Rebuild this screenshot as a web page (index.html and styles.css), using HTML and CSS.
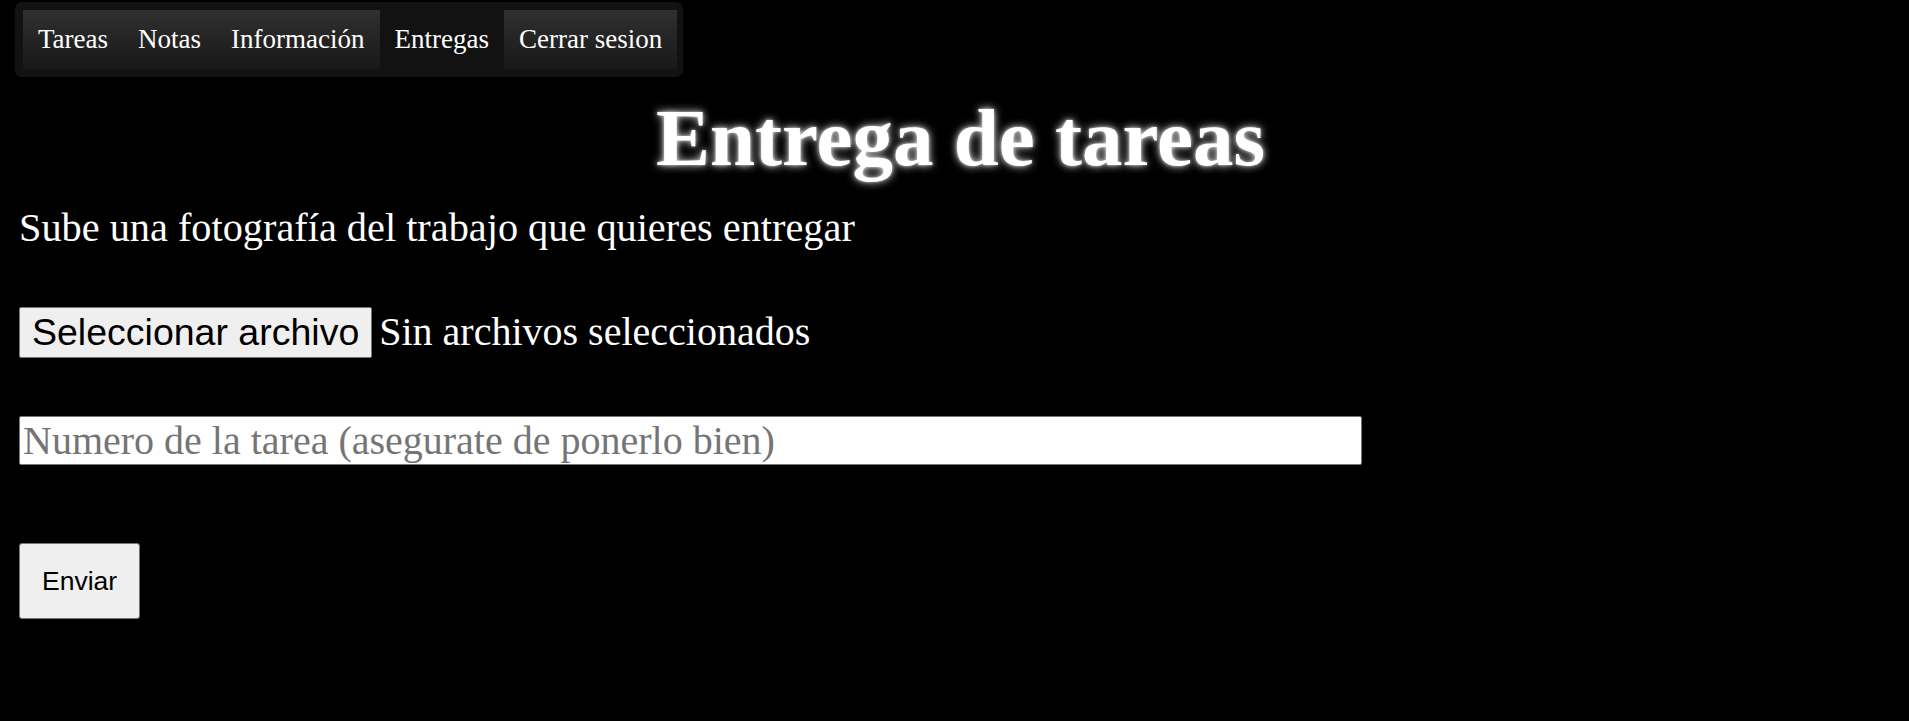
FILE: index.html
```html
<!DOCTYPE html>
<html lang="es">
<head>
<meta charset="utf-8">
<title>Entrega de tareas</title>
<link rel="stylesheet" href="styles.css">
</head>
<body>
  <nav class="menu">
    <a class="menu-item" href="#">Tareas</a>
    <a class="menu-item" href="#">Notas</a>
    <a class="menu-item" href="#">Información</a>
    <a class="menu-item menu-item-active" href="#">Entregas</a>
    <a class="menu-item" href="#">Cerrar sesion</a>
  </nav>
  <h1 class="title">Entrega de tareas</h1>
  <form class="upload">
    <p class="lead">Sube una fotografía del trabajo que quieres entregar</p>
    <div class="file-row">
      <button type="button" class="file-btn">Seleccionar archivo</button>
      <span class="file-label">Sin archivos seleccionados</span>
    </div>
    <input class="task-input" type="text" placeholder="Numero de la tarea (asegurate de ponerlo bien)">
    <button type="button" class="submit-btn">Enviar</button>
  </form>
</body>
</html>
```
FILE: styles.css
```css
html, body {
  margin: 0;
  padding: 0;
  background: #000;
}

body {
  font-family: "Liberation Serif", "Times New Roman", serif;
  color: #fff;
}

.menu {
  display: inline-flex;
  margin: 2px 0 0 15px;
  padding: 8px 6px 8px 8px;
  background: #121212;
  border-radius: 7px;
}

.menu-item {
  display: block;
  padding: 14px 15px;
  font-size: 27px;
  line-height: 31px;
  color: #fff;
  text-decoration: none;
  background: linear-gradient(to bottom, #303030, #181818);
}

.menu-item-active {
  background: #121212;
}

.title {
  margin: 17px 0 0 0;
  padding-left: 12px;
  text-align: center;
  font-family: "Liberation Serif", "Times New Roman", serif;
  font-weight: bold;
  font-size: 81px;
  line-height: 89px;
  color: #fff;
  text-shadow: 0 0 8px rgba(255, 255, 255, 0.95), 0 0 3px rgba(255, 255, 255, 0.6);
}

.upload {
  display: flex;
  flex-direction: column;
  align-items: flex-start;
  padding-left: 19px;
}

.lead {
  margin: 23px 0 0 0;
  font-size: 40.3px;
  line-height: 44px;
}

.file-row {
  display: flex;
  align-items: baseline;
  gap: 7px;
  margin-top: 57px;
}

.file-btn {
  font-family: "Liberation Sans", Arial, sans-serif;
  font-size: 37.5px;
  line-height: 43px;
  padding: 3px 12px;
  color: #000;
  background: #efefef;
  border: 1px solid #767676;
  border-radius: 2px;
}

.file-label {
  font-size: 40px;
  line-height: 44px;
}

.task-input {
  box-sizing: border-box;
  width: 1343px;
  height: 49px;
  margin-top: 58px;
  padding: 0 3px;
  font-family: "Liberation Serif", "Times New Roman", serif;
  font-size: 40px;
  color: #000;
  background: #fff;
  border: 1px solid #767676;
  border-radius: 2px;
}

.task-input::placeholder {
  color: #757575;
}

.submit-btn {
  margin-top: 78px;
  padding: 22px 22px;
  font-family: "Liberation Sans", Arial, sans-serif;
  font-size: 26.5px;
  line-height: 30px;
  color: #000;
  background: #efefef;
  border: 1px solid #767676;
  border-radius: 3px;
}
```
